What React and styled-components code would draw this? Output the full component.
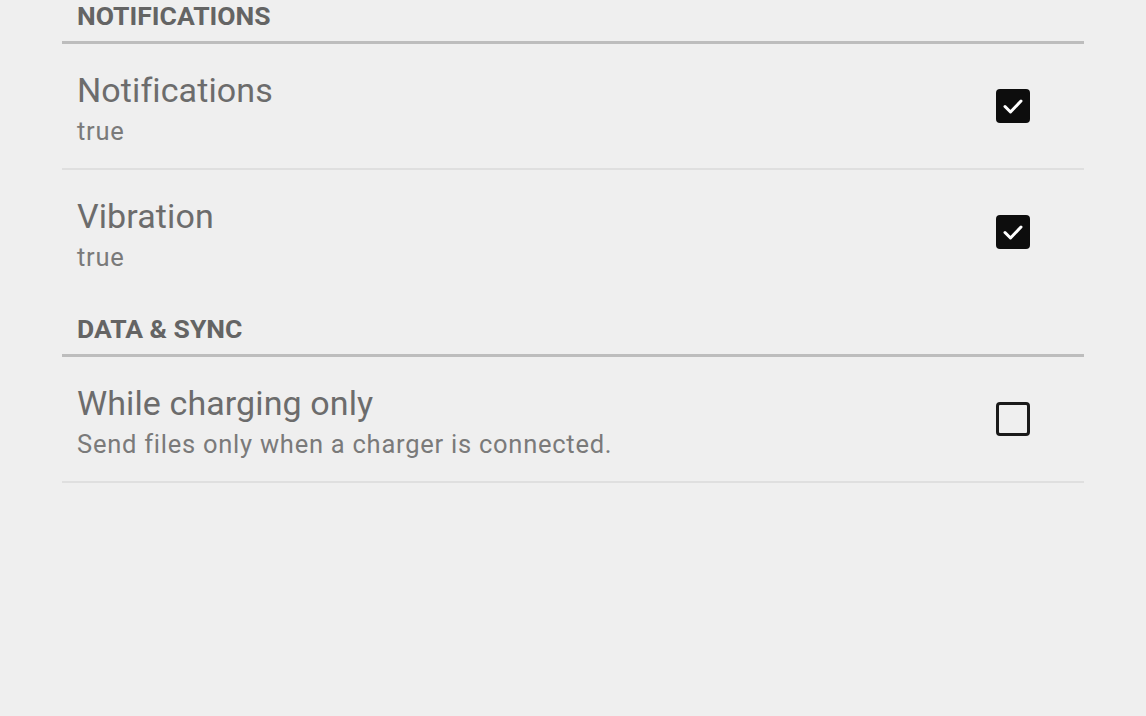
import React from "react";
import styled, { createGlobalStyle } from "styled-components";

const Global = createGlobalStyle`
  html, body { margin: 0; padding: 0; background: #efefef; }
  body { font-family: Roboto, "Noto Sans", "Liberation Sans", sans-serif; overflow: hidden; }
`;

const Screen = styled.div`
  width: 1146px;
  height: 716px;
  background: #efefef;
  overflow: hidden;
`;

const List = styled.div`
  margin: -17px 62px 0 62px;
  display: flex;
  flex-direction: column;
`;

const Header = styled.div`
  padding: 17px 15px 9px;
  font-size: 26.5px;
  line-height: 32px;
  font-weight: 700;
  color: #646464;
  border-bottom: 3px solid #bdbdbd;
`;

const Row = styled.div`
  display: flex;
  align-items: center;
  height: 124px;
  padding: 0 54px 0 15px;
  border-bottom: 2px solid ${(p) => (p.$divider ? "#dfdfdf" : "transparent")};
`;

const Texts = styled.div`
  flex: 1;
  display: flex;
  flex-direction: column;
  gap: 6px;
  padding-top: 4px;
`;

const Title = styled.div`
  font-size: 34px;
  line-height: 40px;
  letter-spacing: 0.1px;
  color: #6c6c6c;
`;

const Summary = styled.div`
  font-size: 25.5px;
  line-height: 30px;
  letter-spacing: 0.75px;
  color: #7a7a7a;
`;

const Box = styled.div`
  width: 34px;
  height: 34px;
  box-sizing: border-box;
  border-radius: 4px;
  display: flex;
  align-items: center;
  justify-content: center;
  background: ${(p) => (p.$checked ? "#0d0d0d" : "transparent")};
  border: ${(p) => (p.$checked ? "none" : "3px solid #1a1a1a")};
`;

const Check = () => (
  <svg width="24" height="24" viewBox="0 0 24 24">
    <path d="M4 12.5 L9.5 18 L20 7" fill="none" stroke="#ffffff" strokeWidth="3" strokeLinecap="round" strokeLinejoin="round" />
  </svg>
);

const Pref = ({ title, summary, checked, divider }) => (
  <Row $divider={divider}>
    <Texts>
      <Title>{title}</Title>
      <Summary>{summary}</Summary>
    </Texts>
    <Box $checked={checked}>{checked && <Check />}</Box>
  </Row>
);

export default function App() {
  return (
    <Screen>
      <Global />
      <List>
        <Header>NOTIFICATIONS</Header>
        <Pref title="Notifications" summary="true" checked divider />
        <Pref title="Vibration" summary="true" checked />
        <Header>DATA &amp; SYNC</Header>
        <Pref title="While charging only" summary="Send files only when a charger is connected." checked={false} divider />
      </List>
    </Screen>
  );
}
